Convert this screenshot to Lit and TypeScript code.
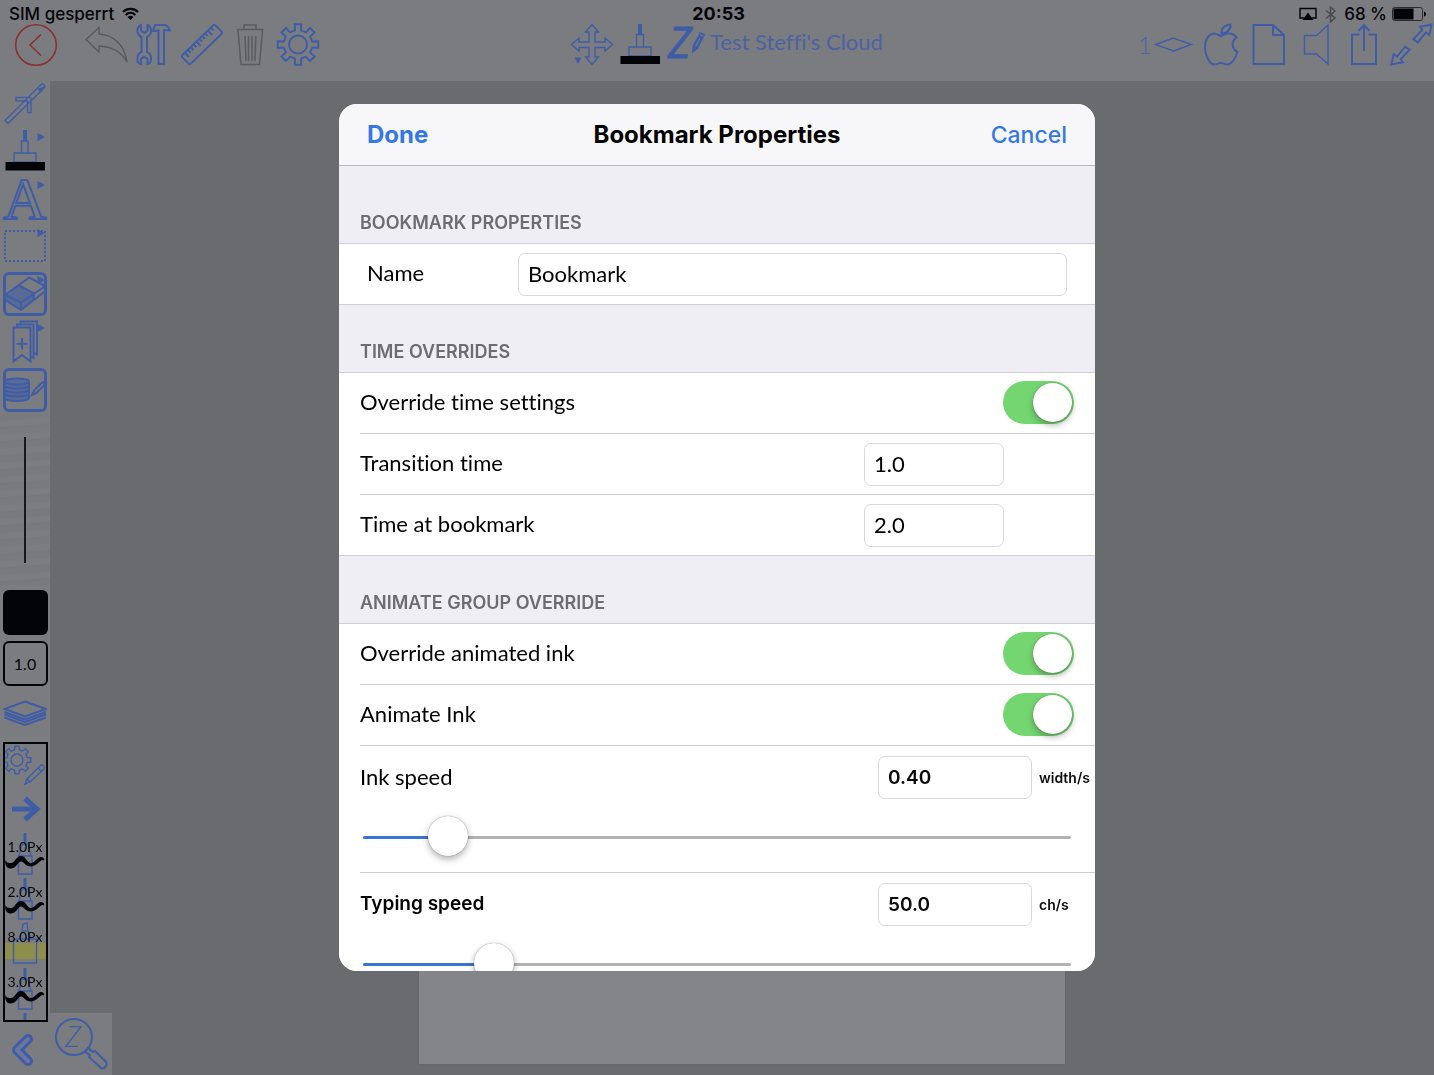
import { LitElement, html, css, svg, type TemplateResult } from "lit";
import { customElement, property, state } from "lit/decorators.js";

/** Outline of a cog wheel with eight square teeth. */
function cog(cx: number, cy: number, outer: number, inner: number): string {
  const points: string[] = [];
  const at = (radius: number, degrees: number) => {
    const a = (degrees * Math.PI) / 180;
    points.push(`${(cx + radius * Math.cos(a)).toFixed(2)} ${(cy + radius * Math.sin(a)).toFixed(2)}`);
  };
  for (let tooth = 0; tooth < 8; tooth++) {
    const mid = tooth * 45;
    at(inner, mid - 12);
    at(outer, mid - 9);
    at(outer, mid + 9);
    at(inner, mid + 12);
  }
  return `M${points.join("L")}Z`;
}

const marker = svg`<path class="solid" d="M34.500 4 42 8 34.500 12Z"/>`;
const outwardArrow = "M40.700 .600 38.300 11 35 8.300 26.700 18.300 22.300 15.300 31.300 6 29 2.700Z";

const icons: Record<string, TemplateResult> = {
  back: svg`<g class="danger"><circle cx="21" cy="21" r="20.3"/><path d="M26 10.5 15 21 26 31.5"/></g>`,
  undo: svg`<path class="muted" d="M1 15.500 14 3.500V10C29 11 39.500 21 42 38C36 27 27 22.500 14 22V28Z"/>`,
  tools: svg`<path class="bold" d="M8 1C5 2.500 4 5 4.500 8C5 10.500 6.500 12 8.500 13V28C6 29 4.500 31 4.500 34V37C5 39 6 40 8 40V35L11 32.500 14.500 35V40C17 39.500 18 38 18 36V34C18 31 16.500 29 14 28V13C17 11.500 18.500 9 18 6C17.500 3.500 16.500 1.500 14.500 1V6.500L11.500 9 8 6.500Z"/>
    <path class="bold" d="M20 7 22 1H32C34.500 1.500 36 4 37 6.500L31 6V40H25.500V6.500Z"/>`,
  ruler: svg`<g class="bold" transform="rotate(-44 21 20.500)"><rect x="-2" y="14.500" width="46" height="12" rx="2"/>
    <path d="M3 14.500v6M7 14.500v4M11 14.500v4M15 14.500v4M19 14.500v6M23 14.500v4M27 14.500v4M31 14.500v4M35 14.500v6M39 14.500v4"/></g>`,
  trash: svg`<g class="muted"><path d="M7.500 5.500H34.500M15 5V1H27V5M9 6 12 40.500H30.500L33.500 6M16 12 17 37M19.500 12V37M23 12V37M26.800 12 26 37"/></g>`,
  gear: svg`<path class="bold" d=${cog(21, 20.5, 20.5, 14.5)}/><circle class="bold" cx="21" cy="20.500" r="9"/>`,
  move: svg`<path d="M21 .500 27.500 8H24V18H34V14L41.500 20.500 34 27V23.500H24V33H27.500L21 40.500 14.500 33H18V23.500H8V27L.500 20.500 8 14V18H18V8H14.500Z"/><path class="solid" d="M3.500 33.500H10.500L7 40Z"/>`,
  pen: svg`<path class="tip" d="M21 0V11"/><path d="M17.500 10.500H24.500V23H17.500ZM10 23H32V32H10Z"/><path class="ink" d="M1.500 32H41V40H1.500Z"/>`,
  note: svg`<text class="mark" x="1" y="34">Z</text>
    <g transform="rotate(28 31 18)"><path class="solid" d="M28 8H34V24L31 31 28 24Z"/><path class="cut" d="M29 10.500H33M31 14V23"/></g>`,
  sheet: svg`<path d="M4.500 20.500 22.500 14 40.500 20.500 22.500 27Z"/>`,
  fruit: svg`<path class="bold" d="M22 12C25 11 27 9 31 9.500C34 10 36 11 37.500 13.500C32 17 32.500 25 38.500 28C37 33 33 39.500 29.500 40.500C26.500 41 25 39 22 39C19 39 17 41 14.500 40.500C10 39 6 31 6 23.500C6 15 10 10 15 9.500C18 9.500 20 11.500 22 12ZM22.500 9.500C22 4.500 26 .500 31.500 .500C32 5 28 9.500 22.500 9.500Z"/>`,
  page: svg`<path class="bold" d="M6.500 1H26L37 11V40H6.500ZM26 1V11H37"/>`,
  speaker: svg`<path d="M9.500 11.500H21.500L33 1V40L21.500 30H9.500Z"/>`,
  share: svg`<path class="bold" d="M16.500 10.500H9V40H33V10.500H25.500M21 27V1M15.500 7 21 1 26.500 7"/>`,
  expand: svg`<path class="bold" d=${outwardArrow}/><path class="bold" transform="rotate(180 20.500 20.500)" d=${outwardArrow}/>`,

  airbrush: svg`<path d="M2 39.500 38 3.500C40 2 43 4.500 41.500 6.500L5 42.500ZM27 16.500H13V20H24.500V31.500H28V16.500"/><path class="solid" d="M34.500 8 42 5 38 12Z"/>`,
  brush: svg`<path class="tip" d="M22 1V12"/><path d="M18.500 12H25V24H18.500ZM11 24H33V33H11Z"/><path class="ink" d="M2.500 33H42V41.500H2.500Z"/>${marker}`,
  letter: svg`<text class="letter" x="22" y="42" text-anchor="middle">A</text>${marker}`,
  select: svg`<rect class="dots" x="2" y="6" width="40" height="30"/>${marker}`,
  eraser: svg`<path class="tint" d="M2 23 15.300 13 30.700 21.300V27.500L18 38 2 28Z"/><path class="bold" d="M2 23 26.300 5.500 42.300 14V19L18 38 2 28ZM2 23 18 30.700 42.300 14M18 30.700V38M15.300 13 30.700 21.300V27.500"/>${marker}`,
  bookmark: svg`<path class="bold" d="M10.500 7.500H27.500V41.500L19 35 10.500 41.500ZM14 7V4.500H30.500V38L28 36.500M17.500 4V1.500H34V34.500L31 33M19 18V29.500M13.500 23.700H24.500"/>${marker}`,
  coins: svg`<path class="tint" d="M2 13.500C2 9.500 26 9.500 26 13.500V30C26 34 2 34 2 30Z"/><path class="bold" d="M2 13.500C2 9.500 26 9.500 26 13.500S2 17.500 2 13.500V30C2 34 26 34 26 30V13.500M2 17.500C2 21.500 26 21.500 26 17.500M2 21.500C2 25.500 26 25.500 26 21.500M2 25.500C2 29.500 26 29.500 26 25.500"/>
    <path class="bold" d="M29 27 31 22.500 39 14.500 41.500 14.500V17L33.500 25Z"/>`,
  setup: svg`<path d=${cog(14, 16, 14, 10.5)}/><circle cx="14" cy="16" r="6"/><path d="M22 40 24 35 37.500 21.500C39.500 20 42.500 22.500 41 25L27 38ZM24 35 27 38M35 24 38.500 27.500"/>`,
  next: svg`<path class="arrow" d="M9 21H34M22 10.500 34 21 22 31.500"/>`,
};

const squiggle = svg`<path class="ink" d="M1 28C1 31 4 31 6 31C10 31 11 24 16 24C21 24 22 31 26 31C30 31 32 25 36 25C39 25 40 28 38.500 28.500C36 26 33 34 26 34.500C20 34.500 19 29.500 16 29.500C13 29.500 12 36 6 36.500C1 36.500-1 31 1 28Z"/>`;

@customElement("tool-icon")
export class ToolIcon extends LitElement {
  @property() name = "";
  @property({ type: Number }) size = 42;

  static styles = css`
    :host { display: block; }
    svg { display: block; overflow: visible; fill: none; stroke: #3f5da6; stroke-width: 1.4px; }
    .bold { stroke-width: 2px; }
    .danger { stroke: #8b3133; stroke-width: 1.6px; }
    .muted { stroke: #595b60; stroke-width: 1.5px; }
    .solid { fill: #3f5da6; stroke: none; }
    .tint { fill: #596a96; stroke: none; }
    .cut { stroke: #7b7c80; stroke-width: 1px; }
    .tip { stroke-width: 4px; }
    .ink { fill: #030408; stroke: none; }
    .dots { stroke-width: 2px; stroke-dasharray: 2 2; }
    .arrow { stroke-width: 5px; }
    .letter { font: 60px "Liberation Serif", serif; stroke-width: 2px; }
    .mark { font: italic 43px "Open Sans", sans-serif; fill: #3f5da6; stroke-width: 1px; }
  `;

  render() {
    return html`<svg width=${this.size} height=${this.size} viewBox="0 0 ${this.size} ${this.size}" aria-hidden="true">${icons[this.name]}</svg>`;
  }
}

interface Preset { label: string; highlighter?: boolean }

@customElement("app-root")
export class AppRoot extends LitElement {
  @state() private inkSpeed = 9.8;
  @state() private typingSpeed = 16.6;

  private presets: Preset[] = [
    { label: "1.0Px" }, { label: "2.0Px" }, { label: "8.0Px", highlighter: true }, { label: "3.0Px" },
  ];

  static styles = css`
    :host {
      display: block;
      --chrome: #7b7c80;
      --canvas: #6a6b6f;
      --blue: #3f5da6;
      --ink: #030408;
      --line: #d0cfd4;
      --ui: Inter, "Liberation Sans", sans-serif;
      --humanist: Lato, "Open Sans", sans-serif;
      font-family: var(--ui);
      color: var(--ink);
    }
    * { box-sizing: border-box; }
    button { appearance: none; border: 0; padding: 0; margin: 0; background: none; font: inherit; color: inherit; display: block; }

    .app { display: grid; grid-template: auto minmax(0, 1fr) / auto minmax(0, 1fr); height: 100vh; background: var(--canvas); overflow: hidden; }
    .top { grid-column: 1 / -1; background: var(--chrome); padding-bottom: 15px; }
    .status, .tools { display: grid; grid-template-columns: 1fr auto 1fr; }
    .status { height: 24px; padding: 4px 8px 0 9px; align-items: center; font-size: 17px; line-height: 20px; font-weight: 500; }
    .status > * { display: flex; align-items: center; gap: 8px; }
    .status svg { display: block; }
    .clock { font-size: 18px; font-weight: 700; padding-left: 2px; }
    .status .end, .tools .end { justify-content: flex-end; }
    .status .end { gap: 8px; }
    .battery { margin-left: -3px; }
    .tools { padding: 0 1px 0 15px; }
    .tools > * { display: flex; gap: 6px; }
    .tools .wide { margin-right: 22px; }
    .tools .middle { padding-left: 6px; }
    .doc { font: 22px/36px var(--humanist); color: #4a63a3; margin: 0 0 0 -5px; font-variant-ligatures: none; }
    .count { font: 24px/42px var(--humanist); color: #4a63a3; font-weight: 300; margin-right: -7px; }

    .side { display: flex; flex-direction: column; align-items: center; width: 50px; min-height: 0; background: var(--chrome); }
    .group { display: flex; flex-direction: column; gap: 4px; margin-bottom: 3px; }
    .boxed { border-radius: 6px; box-shadow: inset 0 0 0 3px var(--blue); }
    .stroke { align-self: stretch; height: 170px; padding: 22px 0; display: flex; justify-content: center;
      background: repeating-linear-gradient(176deg, #797a7e 0 5px, #7c7d81 7px 11px, #78797d 13px 14px); }
    .stroke i { width: 2px; background: #17181b; }
    .swatch { width: 45px; height: 45px; border-radius: 6px; background: var(--ink); margin: 5px 0 6px; flex: none; }
    .width { width: 45px; height: 45px; border-radius: 6px; border: 2px solid var(--ink); font: 16px/20px var(--humanist); text-align: center; flex: none; }
    .layers { margin: 14px 0 15px; fill: none; stroke: var(--blue); stroke-width: 2px; }
    .presets { flex: 1; min-height: 0; width: 45px; overflow: hidden; border: 2px solid var(--ink); display: flex; flex-direction: column; align-items: center; }
    .presets > * { flex: none; }
    .preset { display: grid; height: 45px; width: 41px; }
    .preset > * { grid-area: 1 / 1; }
    .preset span { font: 14px/30px var(--humanist); z-index: 1; }
    .presets svg { fill: none; stroke: var(--blue); stroke-width: 1.4px; display: block; }
    .presets .tip { stroke-width: 3px; }
    .presets .ink { fill: var(--ink); stroke: none; }
    .presets .glow { fill: #8d8e4b; stroke: none; }
    .collapse { padding: 10px 6px 9px 0; }
    .chev { fill: none; stroke-linecap: round; stroke-linejoin: round; display: block; }

    .board { position: relative; display: flex; justify-content: center; align-items: flex-end; padding-bottom: 11px; }
    .sheet { width: 646px; height: 80%; background: #848589; box-shadow: 0 0 2px #5f6064; }
    .magnify { position: absolute; left: 0; bottom: 0; background: var(--chrome); }
    .magnify svg { display: block; fill: none; stroke: var(--blue); stroke-width: 2px; }
    .magnify text { font: italic 300 29px "Open Sans", sans-serif; fill: var(--blue); stroke: none; }

    .overlay { position: fixed; inset: 0; display: grid; place-items: center; }
    .dialog { width: min(756px, 94vw); height: calc(100vh - 208px); border-radius: 18px; overflow: hidden; background: #efeef5; color: #000; display: flex; flex-direction: column; }
    .bar { display: grid; grid-template-columns: 1fr auto 1fr; align-items: center; min-height: 62px; padding: 0 28px; background: #f7f7f9; border-bottom: 1px solid #b9b8be; flex: none; }
    .bar h1 { margin: 0; font-size: 24px; line-height: 28px; font-weight: 700; }
    .bar button { font-size: 23px; line-height: 28px; font-weight: 500; color: #3478e5; justify-self: end; }
    .bar .done { font-size: 24px; font-weight: 700; justify-self: start; }
    .form { flex: 1; min-height: 0; overflow: hidden; }
    h2 { margin: 0; padding: 35px 21px 8px; font-size: 18px; line-height: 24px; font-weight: 600; color: #6c6c72; border-bottom: 1px solid var(--line); }
    .first { padding-top: 45px; }
    .list { background: #fff; border-bottom: 1px solid var(--line); padding-left: 21px; }
    .row { display: flex; align-items: center; min-height: 61px; border-bottom: 1px solid var(--line); }
    .row, .speed { font: 22px/28px var(--humanist); font-variant-ligatures: none; }
    .row:last-child { min-height: 60px; border-bottom: 0; }
    .row label { flex: 1; padding-bottom: 2px; }
    .row .name { flex: 0 0 151px; margin-left: 7px; }
    .field { height: 43px; border: 1px solid #d9d9dc; border-radius: 7px; padding: 0 9px 2px; background: #fff; font: inherit; color: #000; min-width: 0; outline: 0; }
    .long { flex: 1; margin-right: 28px; }
    .short { width: 140px; margin-right: 91px; }
    .switch { appearance: none; width: 71px; height: 43px; border-radius: 22px; margin: 0 21px 2px 0; background: #d8d8dc; padding: 2px; display: flex; }
    .switch::before { content: ""; width: 39px; height: 39px; border-radius: 50%; background: #fff; box-shadow: 0 3px 6px rgb(0 0 0 / 30%), 0 0 1px rgb(0 0 0 / 40%); }
    .switch:checked { background: #74d670; justify-content: flex-end; }

    .speed { display: grid; grid-template-columns: 1fr 154px 56px; column-gap: 7px; align-items: center; padding-top: 10px; padding-bottom: 15px; border-bottom: 1px solid var(--line); }
    .speed label { padding-bottom: 2px; }
    .speed .field, .speed .unit { font-family: var(--ui); font-weight: 600; color: #0b0b0c; }
    .speed .field { width: 154px; font-size: 19px; padding-bottom: 0; }
    .speed .unit { font-size: 14px; line-height: 20px; }
    .plain label { font: 600 19px/28px var(--ui); }
    .slider { grid-column: 1 / -1; appearance: none; height: 40px; margin: 18px 24px 0 3px; background: none; --fill: 0%; }
    .slider::-webkit-slider-runnable-track { height: 3px; border-radius: 2px; background: linear-gradient(#3b73d0, #3b73d0) 0 0 / var(--fill) 100% no-repeat #b3b3b5; }
    .slider::-webkit-slider-thumb { appearance: none; width: 40px; height: 40px; margin-top: -20px; border-radius: 50%; background: #fff; box-shadow: 0 3px 7px rgb(0 0 0 / 32%), 0 0 1px rgb(0 0 0 / 50%); }
  `;

  private tool(name: string, label: string, cls = "", size = 42) {
    return html`<button class=${cls} aria-label=${label}><tool-icon name=${name} .size=${size}></tool-icon></button>`;
  }

  private preset(p: Preset) {
    return html`<button class="preset">
      <svg width="41" height="45" viewBox="0 0 41 45" aria-hidden="true">
        ${p.highlighter
          ? svg`<path class="glow" d="M0 21H41V37H0Z"/><path d="M17 9 18 2 22 1 23 9ZM15 17 17 9H23L26 17M8.500 17H31.500V41H8.500Z"/>`
          : svg`<path class="tip" d="M20 1V11"/><path d="M17 12H23L26 24H14ZM13.500 24H27V42H13.500Z"/>${squiggle}`}
      </svg>
      <span>${p.label}</span>
    </button>`;
  }

  private switchRow(id: string, label: string) {
    return html`<div class="row"><label for=${id}>${label}</label><input class="switch" type="checkbox" role="switch" id=${id} checked></div>`;
  }

  private timeRow(id: string, label: string, value: string) {
    return html`<div class="row"><label for=${id}>${label}</label><input class="field short" type="text" id=${id} .value=${value}></div>`;
  }

  private speedRow(id: string, label: string, value: string, unit: string, position: number, cls: string, move: (v: number) => void) {
    return html`<div class="speed ${cls}">
      <label for=${id}>${label}</label>
      <input class="field" type="text" id=${id} .value=${value}>
      <span class="unit">${unit}</span>
      <input class="slider" type="range" min="0" max="100" step="0.1" aria-label=${label} .value=${String(position)}
        style="--fill: ${position}%" @input=${(e: Event) => move(Number((e.target as HTMLInputElement).value))}>
    </div>`;
  }

  render() {
    return html`
      <div class="app">
        <header class="top">
          <div class="status">
            <div><span>SIM gesperrt</span>
              <svg width="17" height="14" viewBox="0 0 17 14" fill="none" stroke="#030408" stroke-width="2.2" aria-hidden="true">
                <path d="M1 5C5 .800 12 .800 16 5M3.700 8C6.500 5.200 10.500 5.200 13.300 8"/><path d="M5.500 10Q8.500 7.500 11.500 10L8.500 13Z" fill="#030408" stroke="none"/>
              </svg>
            </div>
            <span class="clock">20:53</span>
            <div class="end">
              <svg width="18" height="14" viewBox="0 0 18 14" aria-hidden="true"><path d="M5 11H1V1.500H17V11H13" fill="none" stroke="#030408" stroke-width="1.500"/><path d="M9 5.500 14.500 13H3.500Z" fill="#030408"/></svg>
              <svg width="11" height="17" viewBox="0 0 11 17" fill="none" stroke="#4a4b4f" stroke-width="1.500" aria-hidden="true"><path d="M1 4.500 10 12 5.500 16V1L10 5 1 12.500"/></svg>
              <span>68 %</span>
              <svg class="battery" width="34" height="14" viewBox="0 0 34 14" aria-hidden="true"><rect x=".500" y=".500" width="30" height="13" rx="2" fill="none" stroke="#2a2b2f"/><path d="M1.500 1.500H21.500V12.500H1.500Z" fill="#030408"/><path d="M32 4.500Q34 5 34 7T32 9.500Z" fill="#030408"/></svg>
            </div>
          </div>
          <div class="tools">
            <div>${this.tool("back", "Back", "wide")}${this.tool("undo", "Undo")}${this.tool("tools", "Tools")}${this.tool("ruler", "Ruler")}${this.tool("trash", "Delete")}${this.tool("gear", "Settings")}</div>
            <div class="middle">${this.tool("move", "Move")}${this.tool("pen", "Pen")}${this.tool("note", "Notes")}<p class="doc">Test Steffi's Cloud</p></div>
            <div class="end"><span class="count">1</span>${this.tool("sheet", "Layers")}${this.tool("fruit", "System")}${this.tool("page", "Page")}${this.tool("speaker", "Sound")}${this.tool("share", "Share")}${this.tool("expand", "Full screen")}</div>
          </div>
        </header>

        <nav class="side" aria-label="Drawing tools">
          <div class="group">${this.tool("airbrush", "Airbrush", "", 44)}${this.tool("brush", "Brush", "", 44)}${this.tool("letter", "Text", "", 44)}${this.tool("select", "Select", "", 44)}</div>
          <div class="group">${this.tool("eraser", "Eraser", "boxed", 44)}${this.tool("bookmark", "Bookmarks", "", 44)}${this.tool("coins", "Storage", "boxed", 44)}</div>
          <div class="stroke"><i></i></div>
          <button class="swatch" aria-label="Colour"></button>
          <button class="width">1.0</button>
          <svg class="layers" width="44" height="27" viewBox="0 0 44 27" aria-hidden="true"><path d="M22 1.500 43 9 22 16.500 1.500 9ZM1.500 12 22 19.500 43 12M1.500 14.500 22 22 43 14.500M1.500 17.500 22 25 43 17.500"/></svg>
          <div class="presets">
            ${this.tool("setup", "Edit presets", "", 44)}${this.tool("next", "Next preset", "", 44)}
            ${this.presets.map((p) => this.preset(p))}
            <svg width="41" height="12" viewBox="0 0 41 12" aria-hidden="true"><path class="tip" d="M20 1V12"/></svg>
          </div>
          <button class="collapse" aria-label="Collapse">
            <svg class="chev" width="26" height="34" viewBox="0 0 26 34" aria-hidden="true"><path d="M19 7 8 18 19 29" stroke="#3f5da6" stroke-width="10"/><path d="M19 7 8 18 19 29" stroke="#6a76a0" stroke-width="4"/></svg>
          </button>
        </nav>

        <main class="board">
          <div class="sheet"></div>
          <button class="magnify" aria-label="Zoom">
            <svg width="62" height="62" viewBox="0 0 62 62" aria-hidden="true"><circle cx="24" cy="24" r="18"/><text x="15" y="34">Z</text><path d="M35 39 38 35 43 39 45 38 56 49C58 52 54 57 51 55L39 44 40 42Z"/></svg>
          </button>
        </main>
      </div>

      <div class="overlay">
        <section class="dialog" role="dialog" aria-label="Bookmark Properties">
          <div class="bar"><button class="done">Done</button><h1>Bookmark Properties</h1><button>Cancel</button></div>
          <div class="form">
            <h2 class="first">BOOKMARK PROPERTIES</h2>
            <div class="list"><div class="row"><label class="name" for="name">Name</label><input class="field long" type="text" id="name" .value=${"Bookmark"}></div></div>
            <h2>TIME OVERRIDES</h2>
            <div class="list">
              ${this.switchRow("override-time", "Override time settings")}
              ${this.timeRow("transition", "Transition time", "1.0")}
              ${this.timeRow("at-bookmark", "Time at bookmark", "2.0")}
            </div>
            <h2>ANIMATE GROUP OVERRIDE</h2>
            <div class="list">
              ${this.switchRow("override-ink", "Override animated ink")}
              ${this.switchRow("animate-ink", "Animate Ink")}
              ${this.speedRow("ink-speed", "Ink speed", "0.40", "width/s", this.inkSpeed, "", (v) => (this.inkSpeed = v))}
              ${this.speedRow("typing-speed", "Typing speed", "50.0", "ch/s", this.typingSpeed, "plain", (v) => (this.typingSpeed = v))}
            </div>
          </div>
        </section>
      </div>
    `;
  }
}
